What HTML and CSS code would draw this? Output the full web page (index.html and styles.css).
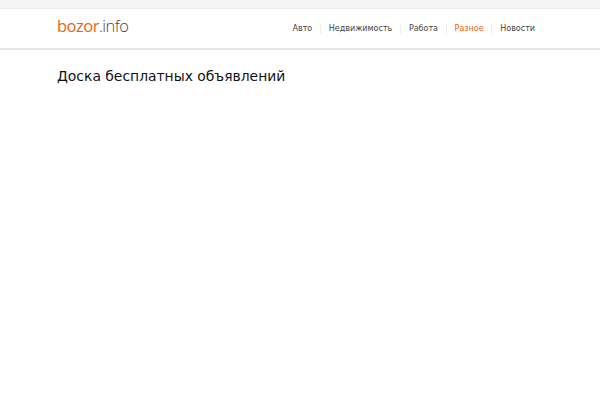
FILE: index.html
```html
<!DOCTYPE html>
<html lang="ru">
<head>
<meta charset="utf-8">
<title>bozor.info</title>
<link rel="stylesheet" href="styles.css">
</head>
<body>
<header class="header">
  <div class="wrap bar">
    <a class="logo" href="#"><span class="logo-main">bozor</span><span class="logo-sub">.info</span></a>
    <nav class="nav">
      <a href="#">Авто</a>
      <a href="#">Недвижимость</a>
      <a href="#">Работа</a>
      <a href="#" class="active">Разное</a>
      <a href="#">Новости</a>
    </nav>
  </div>
</header>
<main class="wrap">
  <h1 class="title">Доска бесплатных объявлений</h1>
</main>
</body>
</html>
```
FILE: styles.css
```css
* { box-sizing: border-box; }
html, body { margin: 0; padding: 0; background: #fff; }
body { font-family: "DejaVu Sans", sans-serif; color: #111; border-top: 8px solid #f5f5f5; }
.wrap { width: 478px; margin-left: 57px; }
.header { height: 42px; background: #fff; border-top: 1px solid #eee; border-bottom: 2px solid #e6e6e6; }
.bar { display: flex; justify-content: space-between; align-items: center; height: 39px; }
.logo { font-family: "Open Sans", sans-serif; font-size: 16.5px; line-height: 20px; text-decoration: none; letter-spacing: -0.5px; margin-bottom: 5px; }
.logo-main { color: #e8650f; font-weight: 500; }
.logo-sub { color: #444; font-weight: 300; }
.nav { display: flex; align-items: center; }
.nav a { font-size: 8px; color: #444; text-decoration: none; padding: 0 7.8px; border-left: 1px solid #eee; line-height: 10px; }
.nav a:first-child { border-left: 0; }
.nav a:last-child { padding-right: 0; }
.nav a.active { color: #e8650f; }
.title { font-size: 13.9px; font-weight: 400; margin: 17px 0 0; line-height: 18px; color: #111; }
```
